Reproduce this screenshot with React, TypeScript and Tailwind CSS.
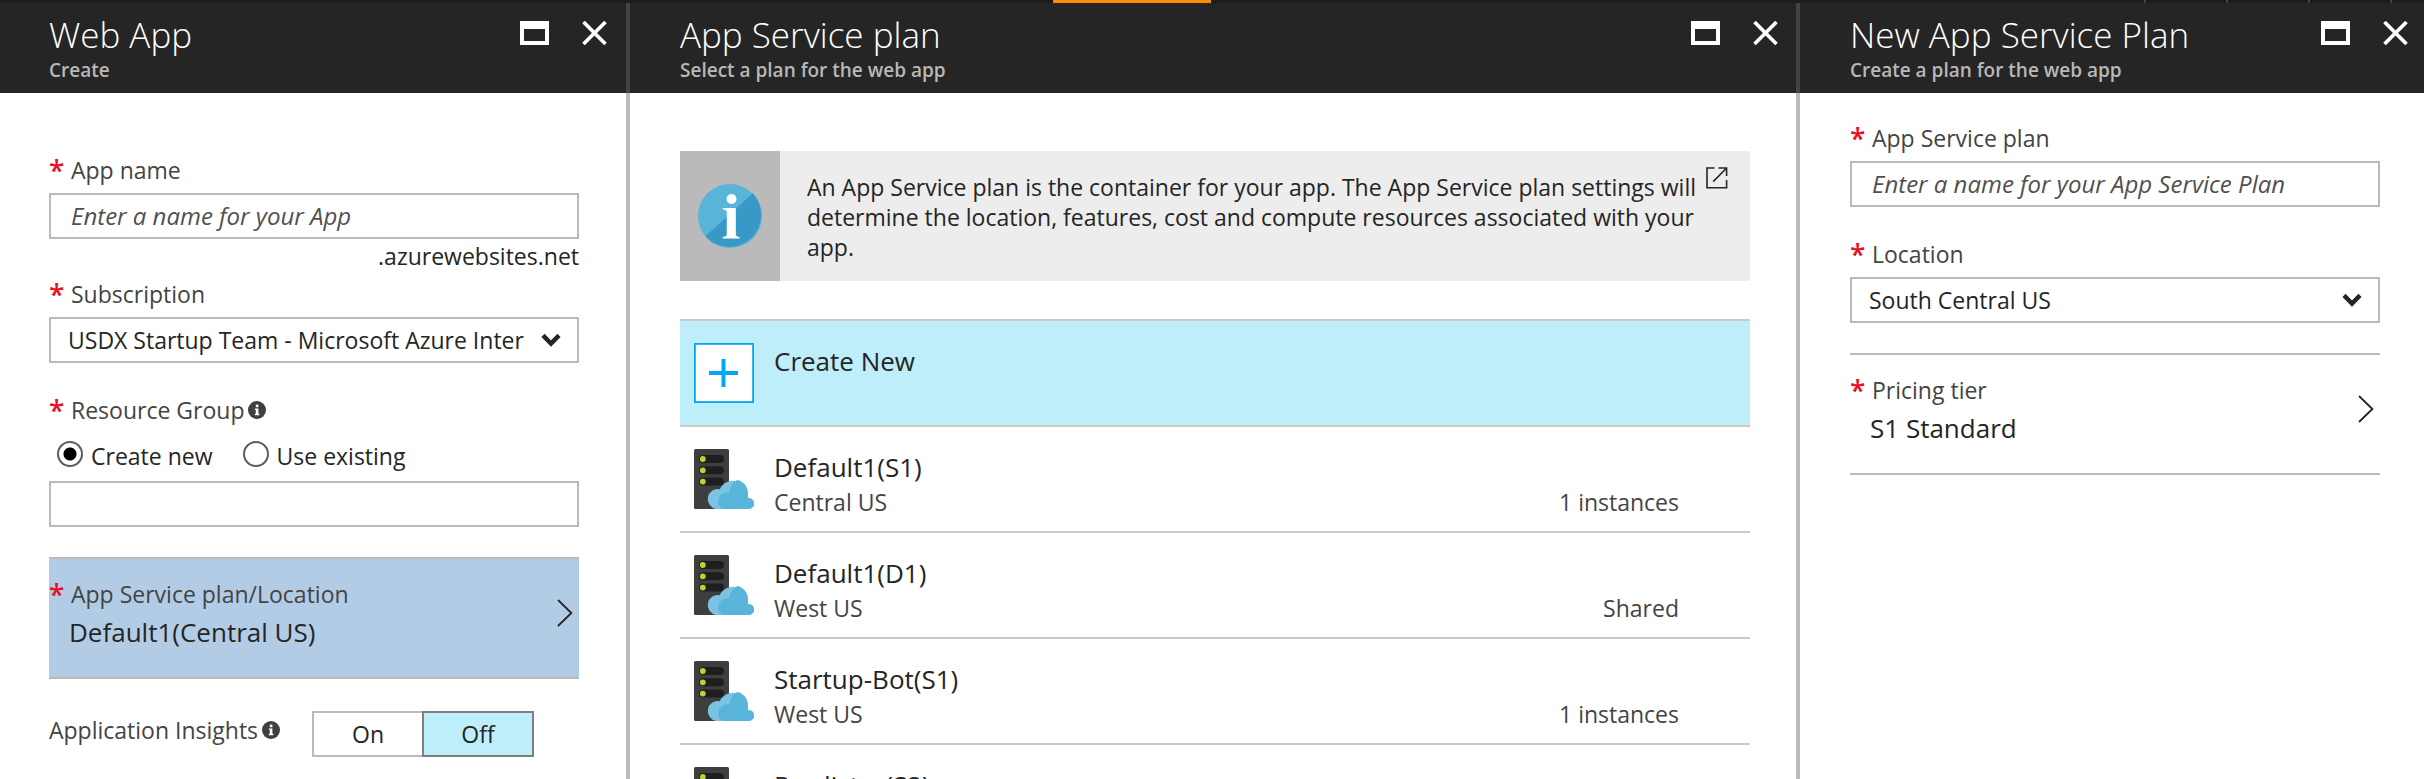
import { useId, useState, type ReactNode } from 'react';

function MaximizeIcon() {
  return (
    <svg width="29" height="24" viewBox="0 0 29 24" aria-hidden="true">
      <path fill="#fff" fillRule="evenodd" d="M0 0H29V24H0ZM4 8V20H25V8Z" />
    </svg>
  );
}

function CloseIcon() {
  return (
    <svg width="25" height="24" viewBox="0 0 25 24" aria-hidden="true">
      <path d="M1.5 1L23.5 23M23.5 1L1.5 23" stroke="#fff" strokeWidth="3.6" fill="none" />
    </svg>
  );
}

function InfoDot() {
  return (
    <svg width="18" height="18" viewBox="0 0 18 18" role="img" aria-label="More information">
      <circle cx="9" cy="9" r="9" fill="#3f3f3f" />
      <rect x="7.8" y="3.6" width="2.6" height="2.6" fill="#fff" />
      <path fill="#fff" d="M6.8 7.4H10.4V12.8H11.4V14.2H6.8V12.8H7.8V8.8H6.8Z" />
    </svg>
  );
}

function InfoBadge() {
  return (
    <svg width="64" height="64" viewBox="0 0 64 64" aria-hidden="true">
      <circle cx="32" cy="32" r="32" fill="#59b4d9" />
      <path fill="#3999c6" d="M54.8 9.2A32 32 0 1 1 7.4 52.2Z" />
      <circle cx="33.5" cy="15" r="5" fill="#fff" />
      <path fill="#fff" d="M24.8 24H37.8V50.5Q38 52.6 41.5 52.9V54.4H24.6V52.9Q28.6 52.6 28.8 50.5V28Q28.6 25.8 24.8 25.4Z" />
    </svg>
  );
}

function ExternalIcon() {
  return (
    <svg width="22" height="22" viewBox="0 0 22 22" aria-hidden="true" fill="none" stroke="#252525" strokeWidth="1.6">
      <path d="M8.5 1H1V20.8H20.6V13" />
      <path d="M12.5 1H20.6V9M20.4 1.2L7.2 14.6" />
    </svg>
  );
}

function SelectArrow() {
  return (
    <svg width="20" height="14" viewBox="0 0 20 14" aria-hidden="true">
      <path d="M2 2.4L10 10.6L18 2.4" stroke="#252525" strokeWidth="4.4" fill="none" />
    </svg>
  );
}

function ChevronIcon() {
  return (
    <svg width="16" height="28" viewBox="0 0 16 28" aria-hidden="true" className="shrink-0">
      <path d="M1 1L14.4 14L1 27" stroke="#252525" strokeWidth="1.8" fill="none" />
    </svg>
  );
}

function PlusTile() {
  return (
    <svg width="60" height="60" viewBox="0 0 60 60" aria-hidden="true" className="shrink-0">
      <rect x="0.9" y="0.9" width="58.2" height="58.2" fill="#fff" stroke="#00a8f3" strokeWidth="1.8" />
      <path d="M29.5 16V44M15 30H44" stroke="#00a8f3" strokeWidth="4" />
    </svg>
  );
}

function ServerIcon() {
  return (
    <svg width="60" height="60" viewBox="0 0 60 60" aria-hidden="true" className="shrink-0">
      <rect width="35" height="60" rx="1.6" fill="#3e3e3e" />
      {[10, 21.3, 32.6].map((y) => (
        <g key={y}>
          <rect x="5" y={y - 4} width="25" height="8" rx="4" fill="#1e1e1e" />
          <circle cx="8.8" cy={y} r="2.9" fill="#b8d432" />
        </g>
      ))}
      <path
        fill="#7ac3e2"
        d="M22 60A10 10 0 1 1 25.6 40.2A15 15 0 0 1 53.9 49.2A5.5 5.5 0 0 1 54.4 60Z"
      />
      <path
        fill="#59b4d9"
        d="M30 60C26 59 24.3 56 24.3 52.4C24.3 46.8 29 42.8 35.6 43.3C35.8 38 38.8 33.2 43.6 31.1C50.4 33 54.2 38.5 54 45C54 46.5 53.8 48 53.4 49.2A5.5 5.5 0 1 1 54.4 60Z"
      />
    </svg>
  );
}

function Blade({ title, subtitle, className, inset, edge, children }: {
  title: string; subtitle: string; className: string; inset: string; edge: string; children: ReactNode;
}) {
  return (
    <section className={`flex flex-col ${className}`}>
      <header className={`flex h-[90px] shrink-0 items-start border-[#444] bg-[#252525] pt-[9px] ${inset} ${edge}`}>
        <div className="flex-1">
          <h2 className="text-[35px] leading-[46px] font-light text-white">{title}</h2>
          <p className="text-[19px] leading-6 font-semibold text-[#b8b8b8]">{subtitle}</p>
        </div>
        <div className="-mr-7 flex gap-[33px] pt-[9px]">
          <button type="button" aria-label="Maximize"><MaximizeIcon /></button>
          <button type="button" aria-label="Close"><CloseIcon /></button>
        </div>
      </header>
      <div className={`min-h-0 flex-1 overflow-hidden border-[#bababa] ${inset} ${edge}`}>{children}</div>
    </section>
  );
}

function Required() {
  return <span aria-hidden="true" className="w-[22px] shrink-0 text-[28px] font-semibold text-[#e81123]">*</span>;
}

function Label({ htmlFor, children }: { htmlFor: string; children: ReactNode }) {
  return (
    <label htmlFor={htmlFor} className="mb-2 flex text-[#444]">
      <Required />
      {children}
    </label>
  );
}

const box = 'block h-[46px] w-full rounded-none border-2 border-[#bababa] bg-white text-[#252525] outline-none';

function TextField({ label, placeholder }: { label: string; placeholder: string }) {
  const id = useId();
  return (
    <div>
      <Label htmlFor={id}>{label}</Label>
      <input id={id} type="text" placeholder={placeholder} className={`${box} px-5 pb-[2px] text-2xl placeholder:text-[#505050] placeholder:italic`} />
    </div>
  );
}

function SelectField({ label, options }: { label: string; options: string[] }) {
  const id = useId();
  return (
    <div>
      <Label htmlFor={id}>{label}</Label>
      <div className="relative">
        <select id={id} className={`${box} appearance-none pr-12 pl-[17px]`}>
          {options.map((o) => <option key={o}>{o}</option>)}
        </select>
        <span className="pointer-events-none absolute inset-y-0 right-[18px] flex items-center"><SelectArrow /></span>
      </div>
    </div>
  );
}

function PickerTile({ label, value, selected }: { label: string; value: string; selected?: boolean }) {
  return (
    <button type="button" className={`mt-[30px] flex w-full border-y-2 border-[#bababa] pt-5 pr-[6px] pb-[27px] text-left ${selected ? 'bg-[#b3cce6]' : 'bg-white'}`}>
      <span className="flex-1">
        <span className="flex text-[#444]"><Required />{label}</span>
        <span className="mt-[5px] block pl-5 text-[26px] leading-9 text-[#252525]">{value}</span>
      </span>
      <span className="pt-5"><ChevronIcon /></span>
    </button>
  );
}

const radio = 'size-[26px] shrink-0 appearance-none rounded-full border-2 border-[#5c5c5c] bg-white checked:bg-[radial-gradient(circle,#000_0,#000_6px,#fff_7px)]';

function ResourceGroup() {
  const [mode, setMode] = useState('new');
  return (
    <fieldset className="mt-8">
      <legend className="flex items-center text-[#444]">
        <Required />Resource Group<span className="pl-1"><InfoDot /></span>
      </legend>
      <div className="mt-4 mb-[10px] flex gap-[30px] pl-2">
        <label className="flex gap-2">
          <input type="radio" name="rg" className={radio} checked={mode === 'new'} onChange={() => setMode('new')} />
          Create new
        </label>
        <label className="flex gap-2">
          <input type="radio" name="rg" className={radio} checked={mode === 'existing'} onChange={() => setMode('existing')} />
          Use existing
        </label>
      </div>
      <input type="text" aria-label="Resource group name" className={`${box} px-5`} />
    </fieldset>
  );
}

const plans = [
  { name: 'Default1(S1)', region: 'Central US', size: '1 instances' },
  { name: 'Default1(D1)', region: 'West US', size: 'Shared' },
  { name: 'Startup-Bot(S1)', region: 'West US', size: '1 instances' },
  { name: 'Predictor(S2)', region: 'West US', size: '1 instances' },
];

const row = 'flex min-h-[106px] w-full items-start gap-5 border-b-2 border-[#cacaca] pt-[22px] pl-[14px] text-left';

export default function App() {
  return (
    <div className="flex h-screen flex-col overflow-hidden bg-white font-['Open_Sans','Noto_Sans',sans-serif] text-[23px] leading-[30px] text-[#252525]">
      <div className="flex h-[3px] shrink-0 bg-[#1c1c1c] pr-8">
        <span className="ml-[1053px] w-[158px] bg-[#ff8c00]" />
        <span className="ml-auto flex gap-20">
          <span className="w-[2px] bg-[#444]" />
          <span className="w-[2px] bg-[#444]" />
          <span className="w-[2px] bg-[#444]" />
          <span className="w-[2px] bg-[#444]" />
        </span>
      </div>
      <main className="flex min-h-0 flex-1">
        <Blade title="Web App" subtitle="Create" className="w-[630px] shrink-0" inset="pl-[49px] pr-[47px]" edge="border-r-4">
          <div className="pt-[62px]">
            <TextField label="App name" placeholder="Enter a name for your App" />
            <p className="mt-[2px] mb-2 text-right">.azurewebsites.net</p>
            <SelectField label="Subscription" options={['USDX Startup Team - Microsoft Azure Inter']} />
            <ResourceGroup />
            <PickerTile label="App Service plan/Location" value="Default1(Central US)" selected />
            <div className="mt-8 flex items-start">
              <span className="flex w-[263px] items-center gap-1 pt-1 text-[#444]">Application Insights<InfoDot /></span>
              <div role="group" aria-label="Application Insights" className="flex">
                <button type="button" aria-pressed="false" className="h-[46px] w-[110px] border-2 border-r-0 border-[#bababa] bg-white">On</button>
                <button type="button" aria-pressed="true" className="h-[46px] w-28 border-2 border-[#7f7f7f] bg-[#bdeefa]">Off</button>
              </div>
            </div>
          </div>
        </Blade>
        <Blade title="App Service plan" subtitle="Select a plan for the web app" className="min-w-0 flex-1" inset="pl-[50px] pr-[46px]" edge="border-r-4">
          <div className="mt-[58px] flex bg-[#ededed]">
            <div className="flex w-[100px] shrink-0 items-center justify-center bg-[#bababa]"><InfoBadge /></div>
            <p className="flex-1 pt-[21px] pb-[19px] pl-[27px]">
              An App Service plan is the container for your app. The App Service plan settings will determine the location, features, cost and compute resources associated with your app.
            </p>
            <a href="#docs" aria-label="Learn more" className="w-[50px] shrink-0 pt-4 pl-[6px]"><ExternalIcon /></a>
          </div>
          <div className="mt-[38px] border-t-2 border-[#cacaca]">
            <button type="button" className={`${row} bg-[#bdeefa]`}>
              <PlusTile />
              <span className="text-[26px] leading-9">Create New</span>
            </button>
            {plans.map((p) => (
              <button key={p.name} type="button" className={row}>
                <ServerIcon />
                <span className="flex-1">
                  <span className="block text-[26px] leading-9">{p.name}</span>
                  <span className="mt-[2px] flex justify-between pr-[71px] text-[#444]">
                    <span>{p.region}</span>
                    <span>{p.size}</span>
                  </span>
                </span>
              </button>
            ))}
          </div>
        </Blade>
        <Blade title="New App Service Plan" subtitle="Create a plan for the web app" className="w-[624px] shrink-0" inset="pl-[50px] pr-11" edge="border-r-0">
          <div className="flex flex-col gap-8 pt-[30px]">
            <TextField label="App Service plan" placeholder="Enter a name for your App Service Plan" />
            <SelectField label="Location" options={['South Central US']} />
          </div>
          <PickerTile label="Pricing tier" value="S1 Standard" />
        </Blade>
      </main>
    </div>
  );
}
